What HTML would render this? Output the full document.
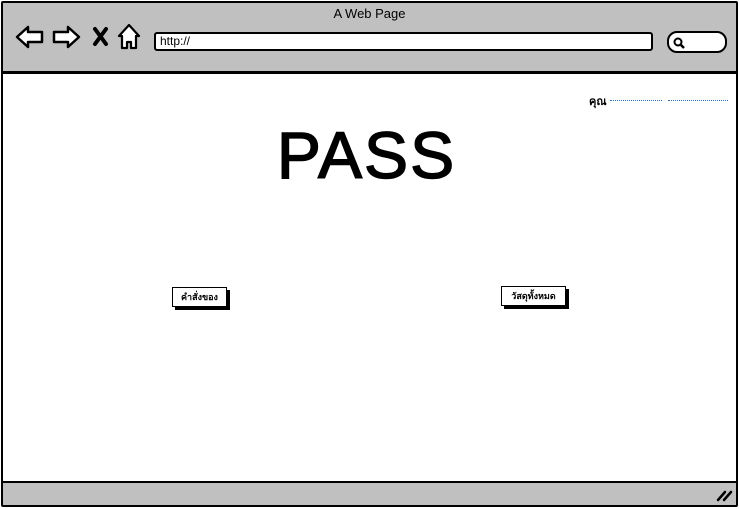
<!DOCTYPE html>
<html><head><meta charset="utf-8"><style>
body{margin:0;width:739px;height:509px;overflow:hidden;background:#fff;font-family:"Liberation Sans","Noto Sans CJK SC",sans-serif;}
.frame{position:absolute;left:1px;top:1px;width:733px;height:502px;border:2px solid #000;border-radius:2px;}
.top{position:absolute;left:3px;top:3px;width:733px;height:68px;background:#c0c0c0;border-bottom:3px solid #000;}
.bot{position:absolute;left:3px;top:481px;width:733px;height:23px;background:#c0c0c0;border-top:2px solid #000;}
.title{position:absolute;left:0;width:739px;top:6px;text-align:center;font-size:13px;}
.url{position:absolute;left:154px;top:32px;width:491px;height:15px;background:#fff;border:2px solid #000;border-radius:3px;font-size:12px;line-height:15px;padding-left:4px;}
.search{position:absolute;left:667px;top:31px;width:56px;height:18px;background:#fff;border:2px solid #000;border-radius:10px;}
.pass{position:absolute;left:0;width:733px;top:117px;text-align:center;font-size:66px;letter-spacing:2px;-webkit-text-stroke:1.5px #000;}
.btn{position:absolute;height:18px;border:1.5px solid #000;background:#fff;box-shadow:3px 3px 0 #000;font-size:9px;font-weight:bold;line-height:18px;text-align:center;}
.user{position:absolute;left:589px;top:92px;font-size:11px;font-weight:bold;}
.dots{position:absolute;top:100px;height:0;border-bottom:1.5px dotted #3070b0;}
</style></head><body>
<div class="top"></div>
<div class="bot"></div>
<div class="frame"></div>
<div class="title">A Web Page</div>
<svg style="position:absolute;left:14px;top:22px" width="130" height="30" viewBox="0 0 130 30">
<path d="M3 15 L14 5 L14 10 L28 10 L28 20 L14 20 L14 25 Z" fill="#fff" stroke="#000" stroke-width="2.5" stroke-linejoin="round"/>
<path d="M65 15 L54 5 L54 10 L40 10 L40 20 L54 20 L54 25 Z" fill="#fff" stroke="#000" stroke-width="2.5" stroke-linejoin="round"/>
<path d="M81 7 L92 22 M92 7 L81 22" stroke="#000" stroke-width="4" stroke-linecap="round"/>
<path d="M115 3 L105 14 L108 14 L108 26 L113 26 L113 20 L117 20 L117 26 L122 26 L122 14 L125 14 Z" fill="#fff" stroke="#000" stroke-width="2.2" stroke-linejoin="round"/>
</svg>
<div class="url">http://</div>
<div class="search"><svg style="position:absolute;left:3px;top:3px" width="14" height="14"><circle cx="6" cy="6" r="3.5" fill="none" stroke="#000" stroke-width="2"/><path d="M8.5 8.5 L12 12" stroke="#000" stroke-width="2.5"/></svg></div>
<div class="user">คุณ</div>
<div class="dots" style="left:610px;width:52px"></div>
<div class="dots" style="left:668px;width:60px"></div>
<div class="pass">PASS</div>
<div class="btn" style="left:172px;top:287px;width:53px;">คำสั่งของ</div>
<div class="btn" style="left:501px;top:286px;width:63px;">วัสดุทั้งหมด</div>
<svg style="position:absolute;left:716px;top:488px" width="20" height="14"><path d="M2 12 L9 4 M8 12 L15 4" stroke="#000" stroke-width="2.5" stroke-linecap="round"/></svg>
</body></html>
